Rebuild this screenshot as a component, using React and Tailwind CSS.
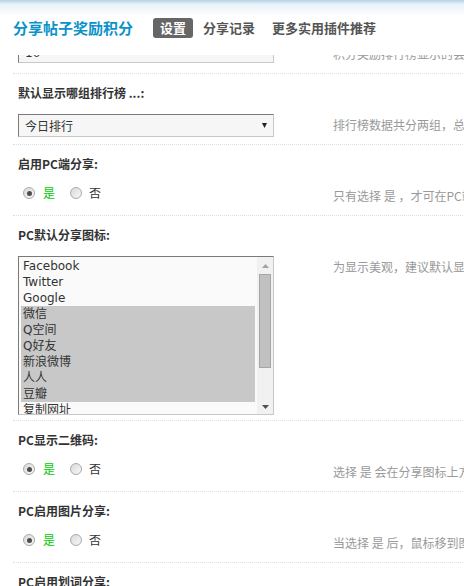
const cjk = "font-['Noto_Sans_CJK_SC','Noto_Sans',sans-serif]"

function Radio({ checked }) {
  return (
    <span className="w-[12px] h-[12px] rounded-full border border-[#a9a9a9] bg-gradient-to-br from-[#d9d9d9] to-[#f8f8f8] flex items-center justify-center shrink-0">
      {checked && <span className="w-[5px] h-[5px] rounded-full bg-[#4d4d4d]" />}
    </span>
  )
}

function YesNo() {
  return (
    <div className="flex items-center h-[16px] pl-[5px] leading-[16px]">
      <Radio checked />
      <span className="ml-[8px] text-[#00cc00]">是</span>
      <span className="ml-[15px]"><Radio /></span>
      <span className="ml-[7px] text-[#333]">否</span>
    </div>
  )
}

function Row({ label, note, valueHeight = 'h-[30px]', children }) {
  return (
    <div className="ml-[13px] w-[640px] border-t border-dotted border-[#d2e2ee]">
      <div className="h-[40px] pt-[11px] pl-[5px] leading-[16px] font-bold text-[#333] whitespace-nowrap">{label}</div>
      {children !== undefined && (
        <div className={`flex pl-[5px] ${valueHeight}`}>
          <div className="w-[315px] shrink-0">{children}</div>
          <div className="mt-[3px] leading-[16px] text-[#999] whitespace-nowrap">{note}</div>
        </div>
      )}
    </div>
  )
}

const icons = ['Facebook', 'Twitter', 'Google', '微信', 'Q空间', 'Q好友', '新浪微博', '人人', '豆瓣', '复制网址']
const selected = ['微信', 'Q空间', 'Q好友', '新浪微博', '人人', '豆瓣']

export default function App() {
  return (
    <div className={`w-[464px] h-[586px] overflow-hidden bg-white flex flex-col text-[12px] text-[#333] ${cjk}`}>
      {/* header */}
      <div className="h-[55px] shrink-0 flex items-center pl-[13px] bg-[linear-gradient(to_bottom,#b3d1e4_0px,#e6f1f8_4px,#ffffff_16px)]">
        <span className="text-[15px] font-bold text-[#0a93c9] leading-[20px]">分享帖子奖励积分</span>
        <span className="ml-[20px] h-[20px] px-[7px] rounded-[3px] bg-[#666] text-white text-[13px] font-bold leading-[20px]">设置</span>
        <span className="ml-[3px] h-[20px] px-[7px] text-[#555] text-[13px] font-bold leading-[20px]">分享记录</span>
        <span className="ml-[3px] h-[20px] px-[7px] text-[#555] text-[13px] font-bold leading-[20px]">更多实用插件推荐</span>
      </div>

      {/* settings, scrolled */}
      <div className="flex-1 overflow-hidden">
        <div className="-mt-[53px]">
          <Row label="" note="积分奖励排行榜显示的会员人数，默认为 10">
            <div className="w-[256px] h-[20px] border border-t-[#7a7a7a] border-l-[#7a7a7a] border-r-[#c8c8c8] border-b-[#c8c8c8] bg-[#f6f6f6] pl-[6px] leading-[18px] font-['DejaVu_Sans',sans-serif]">10</div>
          </Row>

          <Row label="默认显示哪组排行榜 ...:" note="排行榜数据共分两组，总排行和今日排行">
            <div className="w-[256px] h-[23px] border border-t-[#7a7a7a] border-l-[#7a7a7a] border-r-[#c8c8c8] border-b-[#c8c8c8] bg-[#f6f6f6] flex items-center justify-between pl-[6px] pr-[6px]">
              <span className="leading-[16px]">今日排行</span>
              <svg width="5" height="5" viewBox="0 0 5 5"><polygon points="0,0 5,0 2.5,5" fill="#222" /></svg>
            </div>
          </Row>

          <Row label="启用PC端分享:" note="只有选择 是 ，才可在PC端页面显示分享按钮">
            <YesNo />
          </Row>

          <Row label="PC默认分享图标:" note="为显示美观，建议默认显示不超过6个图标" valueHeight="h-[164px]">
            <div className="w-[256px] h-[159px] border border-t-[#7a7a7a] border-l-[#7a7a7a] border-r-[#c8c8c8] border-b-[#c8c8c8] bg-[#fafafa] flex overflow-hidden">
              <div className="flex-1 px-[2px] pt-[1px] font-['DejaVu_Sans','Noto_Sans_CJK_SC',sans-serif] text-[12px] text-[#333]">
                {icons.map(name => (
                  <div
                    key={name}
                    className={`h-[16px] leading-[16px] px-[2px] whitespace-nowrap ${selected.includes(name) ? 'bg-[#c8c8c8]' : ''}`}
                  >
                    {name}
                  </div>
                ))}
              </div>
              {/* scrollbar */}
              <div className="w-[16px] shrink-0 bg-[#f1f1f1] flex flex-col items-center">
                <div className="h-[17px] flex items-center justify-center">
                  <svg width="7" height="4" viewBox="0 0 7 4"><polygon points="3.5,0 7,4 0,4" fill="#a3a3a3" /></svg>
                </div>
                <div className="w-[12px] h-[94px] bg-[#c1c1c1] border border-[#a6a6a6]" />
                <div className="flex-1" />
                <div className="h-[15px] flex items-center justify-center">
                  <svg width="7" height="4" viewBox="0 0 7 4"><polygon points="0,0 7,0 3.5,4" fill="#505050" /></svg>
                </div>
              </div>
            </div>
          </Row>

          <Row label="PC显示二维码:" note="选择 是 会在分享图标上方显示二维码">
            <YesNo />
          </Row>

          <Row label="PC启用图片分享:" note="当选择 是 后，鼠标移到图片上会显示分享按钮">
            <YesNo />
          </Row>

          <Row label="PC启用划词分享:" note="选择文字后显示分享按钮">
            <YesNo />
          </Row>
        </div>
      </div>
    </div>
  )
}
